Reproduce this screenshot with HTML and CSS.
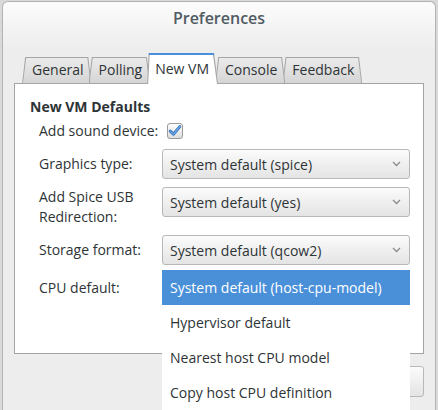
FILE: index.html
```html
<!DOCTYPE html>
<html>
<head>
<meta charset="utf-8">
<link rel="stylesheet" href="styles.css">
</head>
<body>
<div class="window">
  <div class="titlebar">Preferences</div>
  <div class="notebook">
    <div class="tabs">
      <div class="tab t1">General</div>
      <div class="tab t2">Polling</div>
      <div class="tab active">New VM</div>
      <div class="tab t4">Console</div>
      <div class="tab t5">Feedback</div>
    </div>
    <div class="page">
      <div class="heading">New VM Defaults</div>
      <div class="form">
        <div class="label">Add sound device:</div>
        <div class="check-cell">
          <svg class="check" width="16" height="16" viewBox="0 0 16 16">
            <defs>
              <linearGradient id="cb" x1="0" y1="0" x2="0" y2="1">
                <stop offset="0" stop-color="#ffffff"/>
                <stop offset="1" stop-color="#dcdcdc"/>
              </linearGradient>
            </defs>
            <rect x="0.5" y="0.5" width="15" height="15" rx="2.5" fill="url(#cb)" stroke="#9a9a9a"/>
            <path d="M3.2 8.2 L6.4 11.2 L12.8 3.6" fill="none" stroke="#2f6db5" stroke-width="3" stroke-linecap="round" stroke-linejoin="round"/>
            <path d="M3.2 8.2 L6.4 11.2 L12.8 3.6" fill="none" stroke="#6aa6e6" stroke-width="1.5" stroke-linecap="round" stroke-linejoin="round"/>
          </svg>
        </div>
        <div class="label">Graphics type:</div>
        <div class="combo"><span>System default (spice)</span><svg class="arrow" width="9" height="6" viewBox="0 0 9 6"><path d="M1 1 L4.5 4.5 L8 1" fill="none" stroke="#8c8c8c" stroke-width="1.3"/></svg></div>
        <div class="label two">Add Spice USB<br>Redirection:</div>
        <div class="combo"><span>System default (yes)</span><svg class="arrow" width="9" height="6" viewBox="0 0 9 6"><path d="M1 1 L4.5 4.5 L8 1" fill="none" stroke="#8c8c8c" stroke-width="1.3"/></svg></div>
        <div class="label">Storage format:</div>
        <div class="combo"><span>System default (qcow2)</span><svg class="arrow" width="9" height="6" viewBox="0 0 9 6"><path d="M1 1 L4.5 4.5 L8 1" fill="none" stroke="#8c8c8c" stroke-width="1.3"/></svg></div>
        <div class="label">CPU default:</div>
        <div class="combo"><span>System default (host-cpu-model)</span><svg class="arrow" width="9" height="6" viewBox="0 0 9 6"><path d="M1 1 L4.5 4.5 L8 1" fill="none" stroke="#8c8c8c" stroke-width="1.3"/></svg></div>
      </div>
    </div>
  </div>
  <div class="buttons">
    <div class="button">Close</div>
  </div>
</div>
<div class="popup">
  <div class="item selected">System default (host-cpu-model)</div>
  <div class="item">Hypervisor default</div>
  <div class="item">Nearest host CPU model</div>
  <div class="item">Copy host CPU definition</div>
</div>
</body>
</html>
```

FILE: styles.css
```css
html, body {
  margin: 0;
  padding: 0;
}
body {
  width: 438px;
  height: 410px;
  overflow: hidden;
  background: #d9d9d9;
  font-family: "Open Sans", "DejaVu Sans", sans-serif;
  font-size: 14px;
  color: #2e3436;
  position: relative;
}
.window {
  margin: 1px 2px 0 2px;
  height: 430px;
  border: 1px solid #b3b3b3;
  border-bottom: none;
  border-radius: 6px 6px 0 0;
  background: linear-gradient(#fcfcfc 0px, #ededed 48px, #ededed 100%);
  padding: 0 11px;
}
.titlebar {
  height: 45px;
  padding-top: 6px;
  line-height: 20px;
  text-align: center;
  font-size: 16px;
  font-weight: 600;
  color: #505b63;
  box-sizing: content-box;
}
.notebook {
  display: flex;
  flex-direction: column;
}
.tabs {
  display: flex;
  align-items: flex-end;
  height: 31px;
  margin-bottom: -1px;
  padding-left: 8px;
  position: relative;
  z-index: 2;
}
.tab {
  position: relative;
  height: 27px;
  line-height: 26px;
  padding: 0 8px 0 10px;
  margin-right: -3px;
  color: #2e3436;
}
.tab::before,
.tab::after {
  content: "";
  position: absolute;
  clip-path: polygon(3.2px 0, calc(100% - 3.2px) 0, 100% 100%, 0 100%);
  z-index: -1;
}
.tab::before {
  inset: 0;
  background: #a6a6a6;
}
.tab::after {
  top: 1px;
  left: 1px;
  right: 1px;
  bottom: 1px;
  background: linear-gradient(#ebebeb, #d5d5d5);
}
.t1 { z-index: 1; }
.t2 { z-index: 2; }
.active { z-index: 5; }
.t4 { z-index: 4; }
.t5 { z-index: 3; }
.tab.active {
  height: 31px;
  line-height: 26px;
  padding-top: 3px;
  box-sizing: border-box;
  padding-left: 8px;
  padding-right: 9px;
}
.tab.active::before {
  background: linear-gradient(#4a90d9 0, #4a90d9 2px, #a6a6a6 2px);
  clip-path: polygon(1.5px 0, calc(100% - 4px) 0, 100% 100%, 0 100%);
}
.tab.active::after {
  top: 2px;
  bottom: 0;
  background: #ffffff;
  clip-path: polygon(1.5px 0, calc(100% - 4px) 0, 100% 100%, 0 100%);
}
.page {
  position: relative;
  z-index: 1;
  height: 271px;
  box-sizing: border-box;
  border: 1px solid #a3a3a3;
  background: #ffffff;
  padding: 14px 12px 0 15px;
}
.heading {
  font-weight: 700;
  line-height: 18px;
  margin-bottom: 4px;
}
.form {
  display: grid;
  grid-template-columns: 123px 248px;
  grid-auto-rows: minmax(30px, auto);
  grid-template-rows: 21px;
  row-gap: 8px;
  margin-left: 9px;
}
.label {
  display: flex;
  align-items: center;
  line-height: 20px;
}
.label.two {
  align-items: flex-start;
}
.check-cell {
  display: flex;
  align-items: center;
  padding-left: 5px;
}
.check {
  display: block;
}
.combo {
  height: 30px;
  box-sizing: border-box;
  border: 1px solid #b8b8b5;
  border-radius: 3px;
  background: linear-gradient(#fbfbfb, #e4e4e4);
  display: flex;
  align-items: center;
  justify-content: space-between;
  padding: 0 8px 0 7px;
}
.arrow {
  display: block;
}
.buttons {
  display: flex;
  justify-content: flex-end;
  margin-top: 12px;
}
.button {
  height: 31px;
  width: 84px;
  box-sizing: border-box;
  border: 1px solid #b8b8b5;
  border-radius: 3px;
  background: linear-gradient(#fbfbfb, #e4e4e4);
  display: flex;
  align-items: center;
  justify-content: center;
}
.popup {
  position: absolute;
  left: 162px;
  top: 270px;
  width: 248px;
  height: 160px;
  background: #ffffff;
  z-index: 10;
}
.item {
  height: 35px;
  line-height: 35px;
  padding-left: 8px;
  white-space: nowrap;
}
.item.selected {
  background: #4a90d9;
  color: #ffffff;
}
```
